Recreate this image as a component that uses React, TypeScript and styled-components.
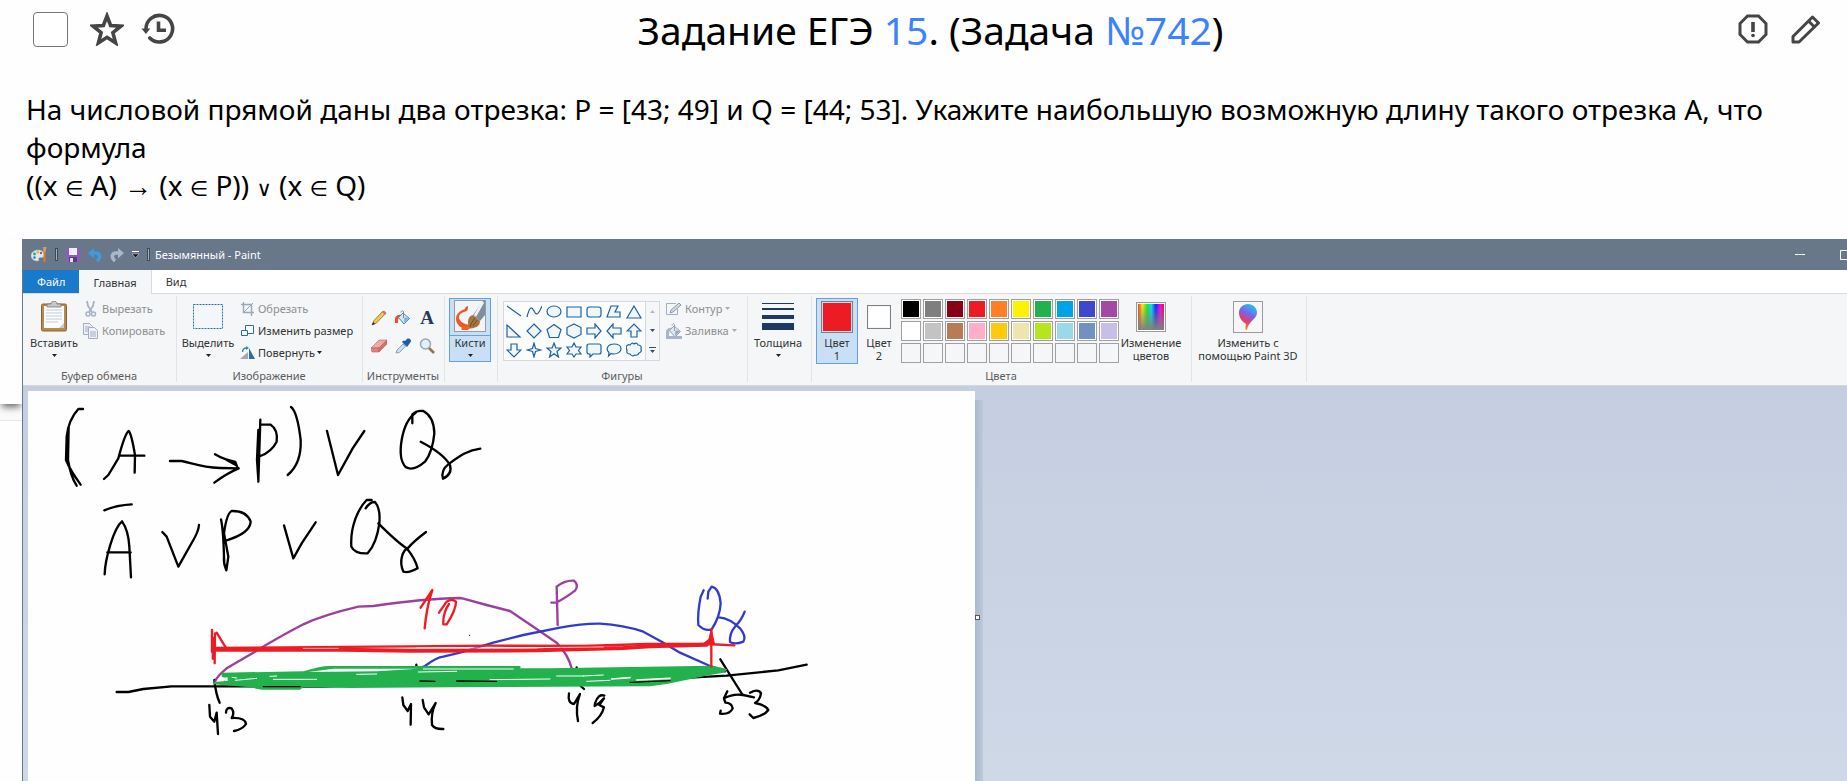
import React from "react";
import styled, { createGlobalStyle } from "styled-components";

const GlobalStyle = createGlobalStyle`
  * { box-sizing: border-box; }
  html, body { margin: 0; background: #fefefe; }
  body { font-family: "Noto Sans", "Open Sans", sans-serif; color: #000; }
  button { font: inherit; color: inherit; background: none; border: 0; padding: 0; margin: 0; }
  svg { display: block; flex: none; }
`;

const INK = "#454545";

/* ---------- task page ---------- */

const Page = styled.main`
  min-height: 100vh;
  display: flex;
  flex-direction: column;
  overflow: hidden;
`;

const Header = styled.header`
  display: grid;
  grid-template-columns: 1fr auto 1fr;
  align-items: center;
  height: 58px;
  padding: 0 19px 0 33px;
`;

const HeaderTools = styled.div<{ $end?: boolean }>`
  display: flex;
  align-items: center;
  gap: ${(p) => (p.$end ? 23 : 17)}px;
  justify-content: ${(p) => (p.$end ? "flex-end" : "flex-start")};
  padding-right: ${(p) => (p.$end ? 8 : 0)}px;
`;

const DoneBox = styled.input`
  appearance: none;
  width: 35px;
  height: 35px;
  margin: 0 5px 0 0;
  border: 1px solid #767676;
  border-radius: 4px;
  background: #fff;
`;

const Title = styled.h1`
  margin: 0;
  padding-top: 2px;
  font-size: 39px;
  line-height: 50px;
  font-weight: 400;
`;

const TitleLink = styled.a`
  color: #3b82ff;
  text-decoration: none;
`;

const Statement = styled.p`
  margin: 0;
  padding: 32px 27px 35px 26px;
  font-size: 28px;
  line-height: 38px;
`;

const MathSign = styled.span`
  font-family: "DejaVu Sans", sans-serif;
  font-size: 21px;
  line-height: 1;
`;

const Arrow = styled.span`
  font-family: "Liberation Sans", sans-serif;
  line-height: 1;
`;

const Stage = styled.div`
  flex: 1;
  display: grid;
  grid-template-columns: 22px minmax(0, 1fr);
`;

const Gutter = styled.div`
  display: flex;
  flex-direction: column;
  background: #fafafa;
`;

const CardEdge = styled.div<{ $last?: boolean }>`
  height: ${(p) => (p.$last ? "auto" : "165px")};
  flex: ${(p) => (p.$last ? "1" : "none")};
  margin-top: ${(p) => (p.$last ? 16 : 0)}px;
  background: #fefefe;
  border-top: ${(p) => (p.$last ? "1px solid #e8e8e8" : "0")};
  box-shadow: ${(p) => (p.$last ? "none" : "0 5px 7px -2px rgba(0, 0, 0, 0.6)")};
`;

/* ---------- paint window ---------- */

const PaintWindow = styled.section`
  display: flex;
  flex-direction: column;
  border-left: 1px solid #68778c;
  font-size: 11px;
  line-height: 13px;
  color: #333;
`;

const TitleBar = styled.div`
  display: flex;
  align-items: center;
  height: 31px;
  background: #68778a;
  color: #fff;
`;

const QuickBar = styled.div`
  display: flex;
  align-items: center;
  gap: 8px;
  padding-left: 8px;
`;

const QuickButton = styled.button`
  display: flex;
  align-items: center;
`;

const Grip = styled.span`
  width: 3px;
  height: 13px;
  border: 1px solid #3f4a58;
  background: #a5afbc;
`;

const WindowName = styled.span`
  flex: 1;
  padding-left: 5px;
`;

const WindowButton = styled.button`
  display: flex;
  width: 45px;
  height: 31px;
  align-items: center;
  justify-content: flex-start;
`;

const CutOffButton = styled(WindowButton)`
  width: 7px;
  overflow: hidden;
`;

const TabBar = styled.nav`
  display: flex;
  height: 24px;
  background: #fff;
  border-bottom: 1px solid #dadbdc;
`;

const Tab = styled.button<{ $kind?: "file" | "active" }>`
  height: ${(p) => (p.$kind === "active" ? 24 : 23)}px;
  padding: 0 14px;
  color: ${(p) => (p.$kind === "file" ? "#fff" : "#333")};
  background: ${(p) =>
    p.$kind === "file" ? "#1979ca" : p.$kind === "active" ? "#f4f6f7" : "none"};
  border-right: ${(p) => (p.$kind === "active" ? "1px solid #dadbdc" : "0")};
`;

const Ribbon = styled.div`
  display: flex;
  height: 92px;
  background: #f4f6f7;
  border-bottom: 1px solid #d5d8dc;
`;

const Group = styled.section<{ $w: number }>`
  width: ${(p) => p.$w}px;
  flex: none;
  display: flex;
  flex-direction: column;
  padding-top: 4px;
  background: linear-gradient(#e1e3e5, #e1e3e5) no-repeat right 2px / 1px 86px;
`;

const GroupBody = styled.div<{ $left?: number; $gap?: number }>`
  display: flex;
  height: 66px;
  padding-left: ${(p) => p.$left ?? 3}px;
  gap: ${(p) => p.$gap ?? 0}px;
`;

const GroupLabel = styled.div`
  margin-top: 3px;
  padding-right: 2px;
  line-height: 18px;
  text-align: center;
  color: #5c5c5c;
`;

const BigButton = styled.button<{ $w: number; $on?: boolean }>`
  width: ${(p) => p.$w}px;
  height: 66px;
  display: flex;
  flex-direction: column;
  align-items: center;
  border: 1px solid ${(p) => (p.$on ? "#62a2e4" : "transparent")};
  background: ${(p) => (p.$on ? "#c9dff5" : "none")};
  white-space: nowrap;
`;

const BrushButton = styled(BigButton)`
  height: 64px;
`;

const BigIcon = styled.span<{ $split?: boolean }>`
  display: flex;
  width: 100%;
  height: 37px;
  flex: none;
  align-items: center;
  justify-content: center;
  padding-bottom: 2px;
  border-bottom: ${(p) => (p.$split ? "1px solid #62a2e4" : "0")};
`;

const ArrowSlot = styled.span`
  display: flex;
  height: 12px;
  align-items: center;
`;

const Rows = styled.div`
  display: flex;
  flex-direction: column;
`;

const RowButton = styled.button<{ $gap?: number; $off?: boolean }>`
  display: flex;
  align-items: center;
  height: 22px;
  padding-bottom: 1px;
  gap: ${(p) => p.$gap ?? 3}px;
  color: ${(p) => (p.$off ? "#8f8f8f" : "#333")};
  white-space: nowrap;
`;

const ToolGrid = styled.div`
  display: grid;
  grid-template-columns: repeat(3, 24px);
  grid-auto-rows: 28px;
  padding-top: 6px;
`;

const ToolButton = styled.button`
  display: flex;
  align-items: center;
  justify-content: center;
`;

const Gallery = styled.div`
  display: flex;
  width: 157px;
  height: 60px;
  margin: 3px 3px 0 0;
  border: 1px solid #d5d8dc;
  background: #fbfcfd;
`;

const ShapeGrid = styled.div`
  display: grid;
  grid-template-columns: repeat(7, 20px);
  grid-template-rows: repeat(3, 1fr);
  flex: 1;
`;

const GalleryScroll = styled.div`
  display: grid;
  grid-template-rows: repeat(3, 1fr);
  width: 14px;
  border-left: 1px solid #d5d8dc;
  background: #f4f6f7;
`;

const Palette = styled.div`
  display: grid;
  grid-template-columns: repeat(10, 20px);
  grid-auto-rows: 20px;
  gap: 2px;
  padding: 1px 0 0 1px;
`;

const Swatch = styled.button<{ $c: string }>`
  border: 1px solid #a0a0a0;
  padding: 1px;
  background: ${(p) => p.$c} content-box;
  box-shadow: inset 0 0 0 1px ${(p) => (p.$c === "transparent" ? "transparent" : "#fff")};
`;

const CurrentColor = styled.span<{ $c: string; $s: number }>`
  width: ${(p) => p.$s}px;
  height: ${(p) => p.$s}px;
  padding: 1px;
  border: 1px solid #7f7f7f;
  background: ${(p) => p.$c} content-box;
`;

const Workspace = styled.div`
  flex: 1;
  display: flex;
  padding: 5px 0 0 5px;
  background: linear-gradient(#c5cee0, #cfd8e7);
`;

const Sheet = styled.div`
  flex: none;
  width: 947px;
  background: #fefefe;
`;

const SheetEdge = styled.div`
  width: 8px;
  margin-top: 9px;
  padding-top: 215px;
  background: linear-gradient(90deg, #aab8cb, #bdc9da);
`;

const Handle = styled.span`
  display: block;
  width: 5px;
  height: 5px;
  border: 1px solid #555;
  background: #fff;
`;

/* ---------- icons ---------- */

const Caret = ({ c = "#222" }: { c?: string }) => (
  <svg width="5" height="3" viewBox="0 0 5 3"><path d="M0 0h5L2.500 3z" fill={c} /></svg>
);

const StarIcon = () => (
  <svg width="34" height="34" viewBox="0 0 34 34" fill="none" stroke={INK} strokeWidth="3.600">
    <path d="M17 4l3.600 9.500 10.200.7-7.900 6.500 2.700 10.200L17 25.300 8.400 30.900l2.700-10.200-7.900-6.500 10.200-.7z" />
  </svg>
);

const HistoryIcon = () => (
  <svg width="34" height="34" viewBox="0 0 34 34" fill="none" stroke={INK} strokeWidth="3.600">
    <path d="M5 17a13.300 13.300 0 1 1 3.800 9" strokeLinecap="round" />
    <path d="M.5 16.500h8.800l-4.400 5.500z" fill={INK} stroke="none" />
    <path d="M17.500 9.500v8.700H25" />
  </svg>
);

const ReportIcon = () => (
  <svg width="30" height="30" viewBox="0 0 30 30" fill="none" stroke={INK} strokeWidth="3">
    <path d="M9.500 2h11L28 9.500v11L20.500 28h-11L2 20.500v-11z" />
    <path d="M15 8v10" strokeWidth="3.600" />
    <circle cx="15" cy="21.500" r="1.800" fill={INK} stroke="none" />
  </svg>
);

const PencilIcon = () => (
  <svg width="29" height="30" viewBox="0 0 29 30" fill="none" stroke={INK} strokeWidth="3" strokeLinejoin="round">
    <path d="M2 22.500L21.500 3l6 6L8 28H2z" />
    <path d="M17.500 7l6 6" />
  </svg>
);

const PaintLogo = () => (
  <svg width="16" height="16" viewBox="0 0 16 16">
    <path d="M7 3C3 3 0 5.500 0 8.700S3 14 6.500 14c1.500 0 1.400-1 1.200-1.800-.3-1.200.8-1.700 2-1.700 2 .2 3.700-.6 3.700-2.800C13.400 4.800 10.500 3 7 3z" fill="#dbe9f3" stroke="#8fb1c9" strokeWidth=".6" />
    <circle cx="3.500" cy="7" r="1.400" fill="#3aa655" /><circle cx="6.800" cy="5.200" r="1.400" fill="#e9b932" />
    <circle cx="3.500" cy="10.500" r="1.300" fill="#2f7fd0" /><circle cx="10" cy="6" r="1.200" fill="#d9463d" />
    <path d="M13.500 5v10" stroke="#e07b28" strokeWidth="2" /><path d="M12 0h3.500L14.500 5h-2z" fill="#d8a05a" />
  </svg>
);

const SaveIcon = () => (
  <svg width="14" height="14" viewBox="0 0 14 14">
    <path d="M0 0h14v14H0z" fill="#8b5fb5" /><path d="M3 0h8v7H3z" fill="#f2eef7" /><path d="M3 9h8v5H3z" fill="#5a3a80" /><path d="M4 10h3v4H4z" fill="#e8e0f0" />
  </svg>
);

const UndoIcon = ({ c, flip }: { c: string; flip?: boolean }) => (
  <svg width="14" height="14" viewBox="0 0 14 14">
    <g transform={flip ? "translate(14 0) scale(-1 1)" : undefined}>
      <path d="M3 5h4.500c5 0 5.500 5 1.500 8" fill="none" stroke={c} strokeWidth="3.600" />
      <path d="M0 5l6-5v10.500z" fill={c} />
    </g>
  </svg>
);

const CustomizeIcon = () => (
  <svg width="7" height="7" viewBox="0 0 7 7"><path d="M0 .5h7" stroke="#fff" /><path d="M0 3h7L3.500 6.500z" fill="#111" stroke="#fff" strokeWidth=".4" /></svg>
);

const PasteIcon = () => (
  <svg width="26" height="31" viewBox="0 0 26 31">
    <rect x=".5" y="3" width="25" height="27" rx="1.500" fill="#b98a4e" stroke="#8a6434" />
    <rect x="3" y="5" width="20" height="22" fill="#fdfdfd" />
    <path d="M18 27l5-5v5z" fill="#c3cad3" />
    <path d="M5 9h16M5 12h16M5 15h16M5 18h16M5 21h12" stroke="#c0cbdb" />
    <path d="M6 6V3h4c0-4 6-4 6 0h4v3z" fill="#c7c7c7" stroke="#777" strokeWidth=".8" />
  </svg>
);

const CutIcon = () => (
  <svg width="16" height="16" viewBox="0 0 16 16" fill="none" stroke="#a7b1c6">
    <path d="M4 0l1 5 4 6M11 0l-1 5-4 6" strokeWidth="1.800" />
    <circle cx="5" cy="13" r="2" strokeWidth="1.500" /><circle cx="10.500" cy="13" r="2" strokeWidth="1.500" />
  </svg>
);

const CopyIcon = () => (
  <svg width="16" height="16" viewBox="0 0 16 16" fill="#eef1f6" stroke="#a3aec5">
    <path d="M.5.500h6l3 3v8h-9z" /><path d="M2 4h5M2 6h5M2 8h4" />
    <path d="M5.500 4.500h6l3 3v8h-9z" /><path d="M7 9h6M7 11h6M7 13h6" />
  </svg>
);

const SelectIcon = () => (
  <svg width="30" height="25" viewBox="0 0 30 25"><rect x=".5" y=".5" width="29" height="24" fill="#f3f7fb" stroke="#1e6fb5" strokeDasharray="2 1" /></svg>
);

const CropIcon = () => (
  <svg width="16" height="14" viewBox="0 0 16 14" fill="none" stroke="#9aa7c0"><path d="M3.500 0v10.500H14M1 2.500h10.500V14" strokeWidth="1.400" /><path d="M4 10l9-9" /></svg>
);

const ResizeIcon = () => (
  <svg width="16" height="14" viewBox="0 0 16 14" fill="#fff" stroke="#1e6fb5"><path d="M5.500 1.500h8v8h-8z" /><path d="M1.500 6.500h6v5h-6z" /></svg>
);

const RotateIcon = () => (
  <svg width="16" height="14" viewBox="0 0 16 14"><path d="M0 13L8 6v7z" fill="#a2a8ae" /><path d="M9 2l6 11H9z" fill="#2b6ea5" /><path d="M2.500 6c0-3 1.500-4 4-4" fill="none" stroke="#2f80cc" strokeWidth="1.300" /><path d="M6 0l3 2-3 2z" fill="#2f80cc" /></svg>
);

const ToolPencil = () => (
  <svg width="16" height="16" viewBox="0 0 16 16"><path d="M1 15l2-4.500L12 1l2.500 2.500L5.500 13z" fill="#f2c94e" stroke="#7a5a20" strokeWidth=".7" /><path d="M11 2l2-1.500L15.500 3 14 5z" fill="#d3706a" /><path d="M1 15l1.200-3L4 14z" fill="#222" /></svg>
);

const BucketIcon = ({ off }: { off?: boolean }) => (
  <svg width="16" height="16" viewBox="0 0 16 16">
    <path d="M8 3l6.500 5.500L9 14 3.500 7.500z" fill={off ? "#dfe5ef" : "#cfe6f6"} stroke={off ? "#97a3bc" : "#4a8bc0"} />
    <path d="M9.500 7.500L9 13l5-5z" fill={off ? "#9aa6bf" : "#76aede"} />
    <path d="M8.500 8V1.500c-1-1.500-2.500-.5-2.500 1" fill="none" stroke={off ? "#97a3bc" : "#7b8794"} />
    <path d="M0 13c-.5-5 0-8 6-8.500C4 6.500 3 8 3 13z" fill={off ? "#a9b4c8" : "#e65320"} />
    {off && <path d="M0 13h16v3H0z" fill="#a9b4c8" />}
  </svg>
);

const TextTool = styled.span`
  font-family: "Liberation Serif", serif;
  font-weight: 700;
  font-size: 19px;
  line-height: 24px;
  color: #1f3b60;
`;

const EraserIcon = () => (
  <svg width="16" height="16" viewBox="0 0 16 16" stroke="#b8605c" strokeWidth=".6"><path d="M0 10L8 2h8L8 10z" fill="#f0aaa4" /><path d="M0 10h8v4H1z" fill="#e2807b" /><path d="M8 10l8-8v4l-8 8z" fill="#d96f6b" /></svg>
);

const DropperIcon = () => (
  <svg width="16" height="16" viewBox="0 0 16 16"><path d="M1 15l1-3 6-6 2.500 2.500-6 6z" fill="#c4def2" stroke="#7897ae" strokeWidth=".8" /><path d="M7 4l5 5 1.500-2L16 3.500C16 1 14.500 0 12.500.5L10 3 8.500 2.500z" fill="#1f5e9e" /></svg>
);

const LensIcon = () => (
  <svg width="16" height="16" viewBox="0 0 16 16"><path d="M9.500 9.500L15 15" stroke="#9b7350" strokeWidth="2.600" /><circle cx="6.500" cy="6" r="5" fill="#e2f0fa" stroke="#9aa7b2" strokeWidth="1.500" /></svg>
);

const BrushIcon = () => (
  <svg width="32" height="32" viewBox="0 0 32 32">
    <rect x=".5" y=".5" width="31" height="31" fill="#eff5f8" stroke="#9b9b9b" />
    <path d="M14 6c-2 1-3 1-3 3C5 11 2 14 2 19c0 5 4 9 10 10l4-4C9 24 5 21 5 17c0-3 4-5 8-6 1-2 1-3 1-5z" fill="#ec5a25" />
    <path d="M31 1v14l-5 6-7-6L29 1z" fill="#7d8ea2" /><path d="M29 2L21 16" stroke="#eef2f6" strokeWidth="2.600" />
    <path d="M19 15l7 6c0 6-5 7-12 8 2-2 0-3 0-6 0-4 1-7 5-8z" fill="#a8743e" /><path d="M16 27c1-4 3-6 5-9M19 26c2-3 3-4 4-6" stroke="#6f4a22" fill="none" />
    <path d="M7 29c3-3 6-4 9-2l-2 3H8z" fill="#f0602a" />
  </svg>
);

const OutlineIcon = () => (
  <svg width="16" height="14" viewBox="0 0 16 14" fill="none" stroke="#a3aec5"><path d="M10 1.500H.5v11h11V7" /><path d="M4 11l1-3 8-7 2 2-8 7z" fill="#d2d9e4" stroke="#8e9bb3" /></svg>
);

const ThicknessIcon = () => (
  <svg width="32" height="28" viewBox="0 0 32 28" fill="#1f3a60"><path d="M0 0h32v1H0zM0 5h32v2H0zM0 12h32v4H0zM0 20h32v7H0z" /></svg>
);

const SpectrumIcon = () => (
  <svg width="30" height="30" viewBox="0 0 30 30">
    <defs>
      <linearGradient id="hue"><stop offset="0" stopColor="#f33" /><stop offset=".17" stopColor="#fe0" /><stop offset=".35" stopColor="#1e3" /><stop offset=".52" stopColor="#0df" /><stop offset=".68" stopColor="#12f" /><stop offset=".86" stopColor="#f0e" /><stop offset="1" stopColor="#f03" /></linearGradient>
      <linearGradient id="fade" x2="0" y2="1"><stop offset="0" stopColor="#808080" stopOpacity="0" /><stop offset="1" stopColor="#808080" /></linearGradient>
    </defs>
    <rect x=".5" y=".5" width="29" height="29" fill="#fff" stroke="#9b9b9b" />
    <path d="M2 2h26v26H2z" fill="url(#hue)" /><path d="M2 2h26v26H2z" fill="url(#fade)" />
  </svg>
);

const Paint3DIcon = () => (
  <svg width="30" height="32" viewBox="0 0 30 32">
    <defs><linearGradient id="drop" x1=".7" y1="0" x2=".3" y2="1"><stop offset="0" stopColor="#19c9ee" /><stop offset=".4" stopColor="#7a63e8" /><stop offset=".68" stopColor="#e83a6b" /><stop offset="1" stopColor="#f6a516" /></linearGradient></defs>
    <rect x=".5" y=".5" width="29" height="31" fill="#f7f7f7" stroke="#9b9b9b" />
    <path d="M15 3c5 0 9 4 9 8.500 0 7-9 8.500-10 17.500-2 0-2-2-1-6-5-3-7-7-7-11.500C6 7 10 3 15 3z" fill="url(#drop)" />
  </svg>
);

const SHAPES = [
  "M1 2L15 12",
  "M1 13C4 1 6 3 8 7s4 5 8-5",
  "M8 2c4 0 7 2.500 7 5.500S12 13 8 13 1 10.500 1 7.500 4 2 8 2z",
  "M1 3h14v10H1z",
  "M3.500 3h9Q15 3 15 5.500v5q0 2.500-2.500 2.500h-9Q1 13 1 10.500v-5Q1 3 3.500 3z",
  "M1 13L5 2h7l-3 6h5v5z",
  "M8 2l7 12H1z",
  "M1 2v12h13z",
  "M8 1l7 7-7 7-7-7z",
  "M8 1.500l7 5-2.500 8h-9L1 6.500z",
  "M8 1l7 3.500v7L8 15l-7-3.500v-7z",
  "M1 5h8V1l6 7-6 7v-4H1z",
  "M15 5H7V1L1 8l6 7v-4h8z",
  "M5 14V8H1l7-7 7 7h-4v6z",
  "M5 2v6H1l7 7 7-7h-4V2z",
  "M8 1l1.500 5.500L15 8 9.500 9.500 8 15 6.500 9.500 1 8l5.500-1.500z",
  "M8 1l1.800 5H15l-4 3.500 1.500 5.500L8 11.800 3.500 15 5 9.500 1 6h5.200z",
  "M8 1l2 4h5l-2.500 3.500L15 12h-5l-2 3-2-3H1l2.500-3.500L1 5h5z",
  "M3 2h10q2 0 2 2v6q0 2-2 2H7l-3 3v-3H3q-2 0-2-2V4q0-2 2-2z",
  "M8 2c4 0 7 2 7 4.700S12 12 8 12c-1 0-2 0-3-.5L2.500 14l.5-3.500C-1 7 2 2 8 2z",
  "M4 3q2-3 4-1 3-2 4 1 4 0 3 4 1 3-2 4-1 3-4 2-3 2-5-1-4 0-3-4-2-4 1-5 0-1 2 0z",
];

const ShapeIcon = ({ d }: { d: string }) => (
  <svg width="16" height="16" viewBox="0 0 16 16"><path d={d} fill={d.startsWith("M1 2L") || d.startsWith("M1 13C") ? "none" : "#f0f7fb"} stroke="#1d629f" strokeWidth="1.200" /></svg>
);

const COLORS = [
  "#000000", "#7f7f7f", "#880015", "#ed1c24", "#ff7f27", "#fff200", "#22b14c", "#00a2e8", "#3f48cc", "#a349a4",
  "#ffffff", "#c3c3c3", "#b97a57", "#ffaec9", "#ffc90e", "#efe4b0", "#b5e61d", "#99d9ea", "#7092be", "#c8bfe7",
  ...Array(10).fill("transparent"),
];

/* ---------- freehand drawing on the sheet ---------- */

const FORMULA_STROKES = [
  "M249 87L235 87Q205 120 200 170L198 240Q210 270 242 314M206 140L204 240Q212 290 230 317",
  "M312 297L325 285L355 235Q375 160 386 153Q394 160 405 225L404 278M358 227H433",
  "M510 243H545C580 250 600 262 660 264L716 265M645 223Q670 238 706 246L712 262M716 265Q680 280 643 308M680 240L706 254",
  "M781 119L775 305M775 150L771 240L775 300M781 133L812 134Q835 150 830 185Q815 215 781 228",
  "M873 81Q892 95 902 180Q905 250 863 285",
  "M981 153L1014 285L1058 205L1093 153",
  "M1237 130L1237 103Q1250 90 1270 93Q1302 110 1303 160Q1298 215 1275 245Q1240 275 1218 262Q1195 240 1205 180Q1215 120 1247 98",
  "M1262 185Q1330 220 1350 255Q1358 282 1329 296Q1322 270 1345 253C1370 235 1400 210 1441 206",
  "M313 391Q350 375 395 373",
  "M314 583C315 540 340 445 366 424Q385 450 388 500L393 592M322 517H392",
  "M487 456L500 470L535 560L580 480Q595 455 597 435",
  "M663 418Q670 450 672 530Q670 550 679 571L685 530L672 460Q680 400 695 393Q740 392 752 425Q750 460 680 481",
  "M852 436L880 535L905 490L947 427",
  "M1097 385Q1110 365 1125 366Q1142 385 1138 430Q1130 490 1103 520Q1065 522 1054 500C1050 440 1075 385 1100 360L1115 360",
  "M1135 430Q1190 485 1220 505Q1245 535 1253 565Q1225 580 1210 575C1195 540 1210 510 1225 503Q1240 485 1278 456",
];

const AXIS_STROKES = [
  "M80 366H115L160 357L245 349H380L700 350L1000 338H1500L1740 330L1800 323L1910 317L2065 301L2150 284",
  "M373 330Q378 375 389 398",
  "M979 284L982 312Q985 330 1000 333L1040 334",
  "M1460 292V322M1472 348L1482 357",
  "M1891 268L1958 375",
  "M358 405L360 440L373 455L380 428L384 492M408 428Q408 410 425 415Q435 430 425 444Q465 442 468 462Q458 478 432 483",
  "M937 382L940 405L953 423L963 402L962 464M998 390L1002 412L1016 433L1037 399Q1022 430 1026 465Q1035 478 1060 477",
  "M1437 370Q1432 400 1452 402L1470 372Q1455 410 1464 453M1543 377Q1525 370 1515 400L1514 408Q1530 400 1542 385L1528 405L1542 412Q1535 440 1508 459",
  "M1912 364L1902 385Q1930 370 1960 375L1992 382M1902 385L1906 398Q1925 398 1928 415Q1920 434 1890 431L1892 422",
  "M1980 368Q2005 355 2013 370Q2010 390 1995 399Q2028 405 2035 420Q2025 435 1990 444L1979 433",
];

const Drawing = () => (
  <svg width="947" height="390" viewBox="28 391 947 390" fill="none" strokeLinecap="round" strokeLinejoin="round" role="img" aria-label="Решение на числовой прямой">
    <g transform="translate(0 380) scale(.33333)" stroke="#000" strokeWidth="7">
      {FORMULA_STROKES.map((d) => <path key={d} d={d} />)}
    </g>
    <g transform="translate(90 570) scale(.33333)">
      <g stroke="#000" strokeWidth="7">{AXIS_STROKES.map((d) => <path key={d} d={d} />)}</g>
      <path stroke="#9c3fa0" strokeWidth="7" d="M376 333Q380 320 410 295L495 245Q560 205 640 163Q700 135 805 110L850 108Q1000 86 1110 84L1120 86L1190 105L1260 123L1330 170L1400 218Q1435 255 1445 295" />
      <path stroke="#9c3fa0" strokeWidth="7" d="M1403 165L1400 50Q1425 30 1452 32Q1468 45 1455 62Q1425 85 1400 97L1384 98" />
      <path stroke="#313dc9" strokeWidth="7" d="M985 295L1005 288Q1040 262 1060 260L1110 248L1210 218L1300 195L1410 173Q1480 160 1530 161Q1600 165 1660 185L1715 215L1770 248L1860 288L1905 305" />
      <path stroke="#313dc9" strokeWidth="7" d="M1841 61L1832 80Q1822 130 1825 165Q1845 185 1865 178Q1890 140 1892 100Q1888 55 1865 50L1855 65L1853 86M1887 142Q1920 145 1950 175Q1970 200 1960 215Q1935 225 1920 216Q1918 190 1935 170Q1955 150 1964 125" />
      <path fill="#22b14c" d="M395 308L640 304Q700 286 720 288H1290Q1295 293 1288 295H1380L1870 287L1912 298L1900 308L1860 315L1730 342L1680 349L1080 352L780 354L640 352L630 359H515L480 352L370 343L370 336L400 334L412 326L395 320z" />
      <path fill="#fefefe" d="M655 306L730 296H985L860 304z" />
      <path fill="#fefefe" d="M402 324L412 321L414 332L404 333z" />
      <g stroke="#fefefe" strokeWidth="3">
        <path d="M800 313L860 312M540 319L560 318M426 322L440 324M436 331L500 325M550 328H680" />
        <path d="M1000 297L1270 297M985 306L1100 304M1400 318H1480M1200 329L1380 327M1480 318L1540 315M1490 334L1560 331" />
        <path strokeWidth="5" d="M1565 327L1620 323M1640 330L1740 325" />
      </g>
      <path stroke="#000" strokeWidth="4" d="M520 350H630M990 333L1035 334M1100 333L1220 334M1620 337L1740 332" />
      <g stroke="#ed1c24">
        <path strokeWidth="7" d="M366 180V245M375 190L374 280M380 188L407 232M992 113L1027 60Q1010 110 1004 175M1047 128L1070 95Q1085 85 1098 95Q1098 120 1070 163L1060 163Q1058 130 1077 102" />
        <path strokeWidth="10" d="M370 205V265" />
        <path strokeWidth="7" d="M380 234L960 229L1200 227L1480 228L1670 222H1850L1933 226" />
        <path strokeWidth="12" d="M370 239H760L960 242L1340 241L1600 234L1680 229L1850 224" />
        <path strokeWidth="7" d="M1864 178V290" />
        <path strokeWidth="3" fill="#ed1c24" d="M1864 178L1874 224H1836L1856 208z" />
      </g>
      <path stroke="#fefefe" strokeWidth="2" d="M640 235H745M980 233L1200 234M1210 234L1540 231" />
      <path stroke="#222" strokeWidth="3" d="M1138 196h1" />
    </g>
  </svg>
);

const In = () => <MathSign>∈</MathSign>;

export default function App() {
  return (
    <Page>
      <GlobalStyle />
      <Header>
        <HeaderTools>
          <DoneBox type="checkbox" aria-label="Решено" />
          <button aria-label="В избранное"><StarIcon /></button>
          <button aria-label="История"><HistoryIcon /></button>
        </HeaderTools>
        <Title>
          Задание ЕГЭ <TitleLink href="#15">15</TitleLink>. (Задача <TitleLink href="#742">№742</TitleLink>)
        </Title>
        <HeaderTools $end>
          <button aria-label="Сообщить об ошибке"><ReportIcon /></button>
          <button aria-label="Редактировать"><PencilIcon /></button>
        </HeaderTools>
      </Header>
      <Statement>
        На числовой прямой даны два отрезка: P = [43; 49] и Q = [44; 53]. Укажите наибольшую возможную длину такого отрезка A, что формула
        <br />
        ((x <In /> A) <Arrow>→</Arrow> (x <In /> P)) <MathSign>∨</MathSign> (x <In /> Q)
      </Statement>
      <Stage>
        <Gutter>
          <CardEdge />
          <CardEdge $last />
        </Gutter>
        <PaintWindow>
          <TitleBar>
            <QuickBar>
              <PaintLogo />
              <Grip />
              <QuickButton aria-label="Сохранить"><SaveIcon /></QuickButton>
              <QuickButton aria-label="Отменить"><UndoIcon c="#3d9be0" /></QuickButton>
              <QuickButton aria-label="Вернуть"><UndoIcon c="#a9b7c9" flip /></QuickButton>
              <QuickButton aria-label="Настройка панели"><CustomizeIcon /></QuickButton>
              <Grip />
            </QuickBar>
            <WindowName>Безымянный - Paint</WindowName>
            <WindowButton aria-label="Свернуть"><svg width="10" height="11" viewBox="0 0 10 11"><path d="M0 5.500h10" stroke="#fff" /></svg></WindowButton>
            <CutOffButton aria-label="Развернуть"><svg width="10" height="10" viewBox="0 0 10 10"><path d="M.5.500h9v9h-9z" fill="none" stroke="#fff" /></svg></CutOffButton>
          </TitleBar>
          <TabBar>
            <Tab $kind="file">Файл</Tab>
            <Tab $kind="active">Главная</Tab>
            <Tab>Вид</Tab>
          </TabBar>
          <Ribbon>
            <Group $w={154}>
              <GroupBody $gap={1}>
                <BigButton $w={56}><BigIcon><PasteIcon /></BigIcon>Вставить<ArrowSlot><Caret /></ArrowSlot></BigButton>
                <Rows>
                  <RowButton $off><CutIcon />Вырезать</RowButton>
                  <RowButton $off><CopyIcon />Копировать</RowButton>
                </Rows>
              </GroupBody>
              <GroupLabel>Буфер обмена</GroupLabel>
            </Group>
            <Group $w={186}>
              <GroupBody $gap={4}>
                <BigButton $w={56}><BigIcon><SelectIcon /></BigIcon>Выделить<ArrowSlot><Caret /></ArrowSlot></BigButton>
                <Rows>
                  <RowButton $gap={2} $off><CropIcon />Обрезать</RowButton>
                  <RowButton $gap={2}><ResizeIcon />Изменить размер</RowButton>
                  <RowButton $gap={2}><RotateIcon />Повернуть <Caret /></RowButton>
                </Rows>
              </GroupBody>
              <GroupLabel>Изображение</GroupLabel>
            </Group>
            <Group $w={82}>
              <GroupBody $left={4}>
                <ToolGrid>
                  <ToolButton aria-label="Карандаш"><ToolPencil /></ToolButton>
                  <ToolButton aria-label="Заливка цветом"><BucketIcon /></ToolButton>
                  <ToolButton aria-label="Текст"><TextTool>A</TextTool></ToolButton>
                  <ToolButton aria-label="Ластик"><EraserIcon /></ToolButton>
                  <ToolButton aria-label="Палитра"><DropperIcon /></ToolButton>
                  <ToolButton aria-label="Масштаб"><LensIcon /></ToolButton>
                </ToolGrid>
              </GroupBody>
              <GroupLabel>Инструменты</GroupLabel>
            </Group>
            <Group $w={53}>
              <GroupBody $left={4}>
                <BrushButton $w={42} $on><BigIcon $split><BrushIcon /></BigIcon>Кисти<ArrowSlot><Caret /></ArrowSlot></BrushButton>
              </GroupBody>
            </Group>
            <Group $w={250}>
              <GroupBody $left={5} $gap={3}>
                <Gallery>
                  <ShapeGrid>
                    {SHAPES.map((d, i) => <ToolButton key={d} aria-label={`Фигура ${i + 1}`}><ShapeIcon d={d} /></ToolButton>)}
                  </ShapeGrid>
                  <GalleryScroll>
                    <ToolButton aria-label="Вверх"><svg width="5" height="3" viewBox="0 0 5 3"><path d="M0 3h5L2.500 0z" fill="#b5bac2" /></svg></ToolButton>
                    <ToolButton aria-label="Вниз"><Caret c="#3b4d68" /></ToolButton>
                    <ToolButton aria-label="Все фигуры"><svg width="7" height="6" viewBox="0 0 7 6"><path d="M0 0h7v1H0zM1 3h5L3.500 6z" fill="#3b4d68" /></svg></ToolButton>
                  </GalleryScroll>
                </Gallery>
                <Rows>
                  <RowButton $off><OutlineIcon />Контур <Caret c="#a8adb5" /></RowButton>
                  <RowButton $off><BucketIcon off />Заливка <Caret c="#a8adb5" /></RowButton>
                </Rows>
              </GroupBody>
              <GroupLabel>Фигуры</GroupLabel>
            </Group>
            <Group $w={64}>
              <GroupBody $left={2}>
                <BigButton $w={56}><BigIcon><ThicknessIcon /></BigIcon>Толщина<ArrowSlot><Caret /></ArrowSlot></BigButton>
              </GroupBody>
            </Group>
            <Group $w={380}>
              <GroupBody $left={4}>
                <BigButton $w={42} $on><BigIcon><CurrentColor $c="#ed1c24" $s={32} /></BigIcon>Цвет<span>1</span></BigButton>
                <BigButton $w={42}><BigIcon><CurrentColor $c="#ffffff" $s={24} /></BigIcon>Цвет<span>2</span></BigButton>
                <Palette>
                  {COLORS.map((c, i) => <Swatch key={i} $c={c} aria-label={`Цвет ${i + 1}`} />)}
                </Palette>
                <BigButton $w={64}><BigIcon><SpectrumIcon /></BigIcon>Изменение<span>цветов</span></BigButton>
              </GroupBody>
              <GroupLabel>Цвета</GroupLabel>
            </Group>
            <Group $w={115}>
              <GroupBody $left={2}>
                <BigButton $w={108}><BigIcon><Paint3DIcon /></BigIcon>Изменить с<span>помощью Paint 3D</span></BigButton>
              </GroupBody>
            </Group>
          </Ribbon>
          <Workspace>
            <Sheet><Drawing /></Sheet>
            <SheetEdge><Handle /></SheetEdge>
          </Workspace>
        </PaintWindow>
      </Stage>
    </Page>
  );
}
